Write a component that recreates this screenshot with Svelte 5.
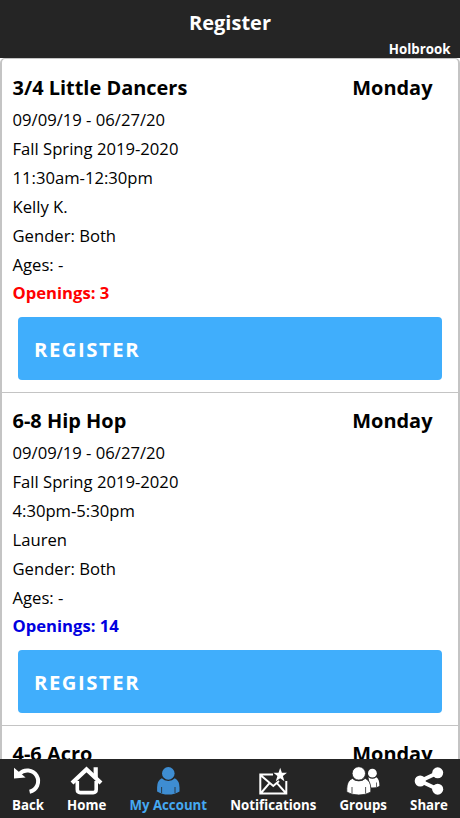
<script lang="ts">
	type ClassItem = {
		name: string;
		day: string;
		dates: string;
		session: string;
		time: string;
		instructor: string;
		gender: string;
		ages: string;
		openings: number;
	};

	const classes: ClassItem[] = [
		{
			name: '3/4 Little Dancers',
			day: 'Monday',
			dates: '09/09/19 - 06/27/20',
			session: 'Fall Spring 2019-2020',
			time: '11:30am-12:30pm',
			instructor: 'Kelly K.',
			gender: 'Both',
			ages: '-',
			openings: 3
		},
		{
			name: '6-8 Hip Hop',
			day: 'Monday',
			dates: '09/09/19 - 06/27/20',
			session: 'Fall Spring 2019-2020',
			time: '4:30pm-5:30pm',
			instructor: 'Lauren',
			gender: 'Both',
			ages: '-',
			openings: 14
		}
	];

	const nextClass = { name: '4-6 Acro', day: 'Monday' };

	const tabs = ['Back', 'Home', 'My Account', 'Notifications', 'Groups', 'Share'];
	let activeTab = $state('My Account');
</script>

<div class="app">
	<header class="header">
		<h1>Register</h1>
		<span class="location">Holbrook</span>
	</header>

	<main class="content">
		<ul class="class-list">
			{#each classes as item}
				<li class="class-item">
					<div class="class-heading">
						<h2>{item.name}</h2>
						<h2>{item.day}</h2>
					</div>
					<p>{item.dates}</p>
					<p>{item.session}</p>
					<p>{item.time}</p>
					<p>{item.instructor}</p>
					<p>Gender: {item.gender}</p>
					<p>Ages: {item.ages}</p>
					<p class="openings" class:low={item.openings < 5}>Openings: {item.openings}</p>
					<button class="register">REGISTER</button>
				</li>
			{/each}
			<li class="class-item">
				<div class="class-heading">
					<h2>{nextClass.name}</h2>
					<h2>{nextClass.day}</h2>
				</div>
			</li>
		</ul>
	</main>

	<nav class="tab-bar">
		{#each tabs as tab}
			<button class="tab" class:active={tab === activeTab} onclick={() => (activeTab = tab)}>
				<svg class="icon" width="34" height="30" viewBox="0 0 34 30" aria-hidden="true">
					{#if tab === 'Back'}
						<path d="M8.3 8A10.8 10.8 0 1 1 18.6 25.8" fill="none" stroke="currentColor" stroke-width="4" />
						<path d="M3 1.8V12.4L14.6 11.4Z" fill="currentColor" />
					{:else if tab === 'Home'}
						<path d="M2 17 16.5 3.4 31 17" fill="none" stroke="currentColor" stroke-width="4.2" />
						<path
							d="M7.3 15V23.6Q7.3 26.6 10.3 26.6H23.2Q26.2 26.6 26.2 23.6V15"
							fill="none"
							stroke="currentColor"
							stroke-width="3.6"
						/>
						<path d="M23.6 1.3h4.2v12L23.6 9Z" fill="currentColor" />
					{:else if tab === 'My Account'}
						<circle cx="17.3" cy="7.4" r="6.3" fill="currentColor" />
						<path
							d="M10.8 12.3Q13.3 14.9 17.3 14.9T23.8 12.3Q28.5 14.7 28.5 21.5V25.5Q23.8 28.6 17.3 28.6T6.1 25.5V21.5Q6.1 14.7 10.8 12.3Z"
							fill="currentColor"
						/>
						<path d="M10.6 21V27M24 21V27" stroke="#252525" stroke-width="0.8" />
					{:else if tab === 'Notifications'}
						<path
							d="M17 8.6H4.3V27.6H30.3V15M5 9.4 17.3 20 23 15M5 27 13.5 17.2M29.8 27 21 17.2"
							fill="none"
							stroke="currentColor"
							stroke-width="2"
						/>
						<path
							d="M24.2 1.8 25.9 6.8H31L26.9 10 28.4 15.3 24.2 12.2 19.8 15.3 21.4 10 17.4 6.8H22.5Z"
							fill="currentColor"
						/>
					{:else if tab === 'Groups'}
						<circle cx="26.4" cy="7.2" r="4.4" fill="currentColor" />
						<path d="M22.4 11.3Q26.4 14.4 30.4 11.3Q33.4 13 33.4 20Q30 22 24.5 21.4Z" fill="currentColor" />
						<path d="M30.5 16.5V21" stroke="#252525" stroke-width="0.7" />
						<g stroke="#252525" stroke-width="0.8">
							<path
								d="M6.4 12.4Q8.8 14.9 12.8 14.9T19.2 12.4Q24.8 14.8 24.8 22.6V26.1Q20 29 12.8 29T.8 26.1V22.6Q.8 14.8 6.4 12.4Z"
								fill="currentColor"
							/>
							<circle cx="12.8" cy="7.4" r="6.7" fill="currentColor" />
							<path d="M6 21V27.6M19.6 21V27.6" />
						</g>
					{:else}
						<path d="M25.7 6.8 8.2 15 25.7 23.2" fill="none" stroke="currentColor" stroke-width="3.8" />
						<circle cx="25.7" cy="6.8" r="5.5" fill="currentColor" />
						<circle cx="8.2" cy="15" r="5.5" fill="currentColor" />
						<circle cx="25.7" cy="23.2" r="5.5" fill="currentColor" />
					{/if}
				</svg>
				<span>{tab}</span>
			</button>
		{/each}
	</nav>
</div>

<style>
	:global(body) {
		background: white;
	}

	.app {
		display: flex;
		flex-direction: column;
		height: 818px;
		overflow: hidden;
		color: black;
		font-family: 'Open Sans', sans-serif;
	}

	.header {
		display: flex;
		flex: none;
		flex-direction: column;
		box-sizing: border-box;
		height: 58px;
		padding-top: 8px;
		background: #252525;
		color: white;
		font-weight: 700;
	}

	h1 {
		margin: 0;
		font-size: 20px;
		line-height: 30px;
		text-align: center;
	}

	.location {
		padding-right: 9.5px;
		font-size: 13.3px;
		line-height: 22px;
		text-align: right;
	}

	.content {
		flex: 1;
		min-height: 0;
		overflow: hidden;
	}

	.class-list {
		margin: 0;
		padding: 1px 0 0;
		border: 2px solid #c4c4c4;
		border-top-width: 1px;
		border-radius: 5px 5px 0 0;
		list-style: none;
	}

	.class-item {
		box-sizing: border-box;
		height: 333px;
		padding: 12px 10.5px 0;
		border-bottom: 1px solid #c4c4c4;
	}

	.class-heading {
		display: flex;
		justify-content: space-between;
		margin-bottom: 2px;
		padding-right: 15px;
	}

	h2 {
		margin: 0;
		font-size: 19.95px;
		font-weight: 700;
		line-height: 32px;
	}

	p {
		margin: 0;
		font-size: 16.65px;
		line-height: 28.9px;
	}

	.openings {
		color: #0000e0;
		font-weight: 700;
	}

	.openings.low {
		color: #f00;
	}

	.register {
		display: block;
		width: 424px;
		height: 63px;
		margin: 9px 0 0 5px;
		padding: 0 16.5px;
		border: 0;
		border-radius: 4px;
		background: #40aefc;
		color: white;
		font: 700 20.3px 'Open Sans', sans-serif;
		letter-spacing: 1.55px;
		text-align: left;
	}

	.tab-bar {
		display: flex;
		flex: none;
		justify-content: space-between;
		box-sizing: border-box;
		height: 59px;
		padding: 7px 12px 0;
		background: #252525;
	}

	.tab {
		display: flex;
		flex-direction: column;
		align-items: center;
		padding: 0;
		border: 0;
		background: none;
		color: white;
		font: 700 13.25px/18px 'Open Sans', sans-serif;
		white-space: nowrap;
	}

	.tab.active {
		color: #45a9f2;
	}

	.icon {
		flex: none;
		margin: 0 -2px;
	}

	.tab.active .icon {
		color: #3e8dd2;
	}
</style>
